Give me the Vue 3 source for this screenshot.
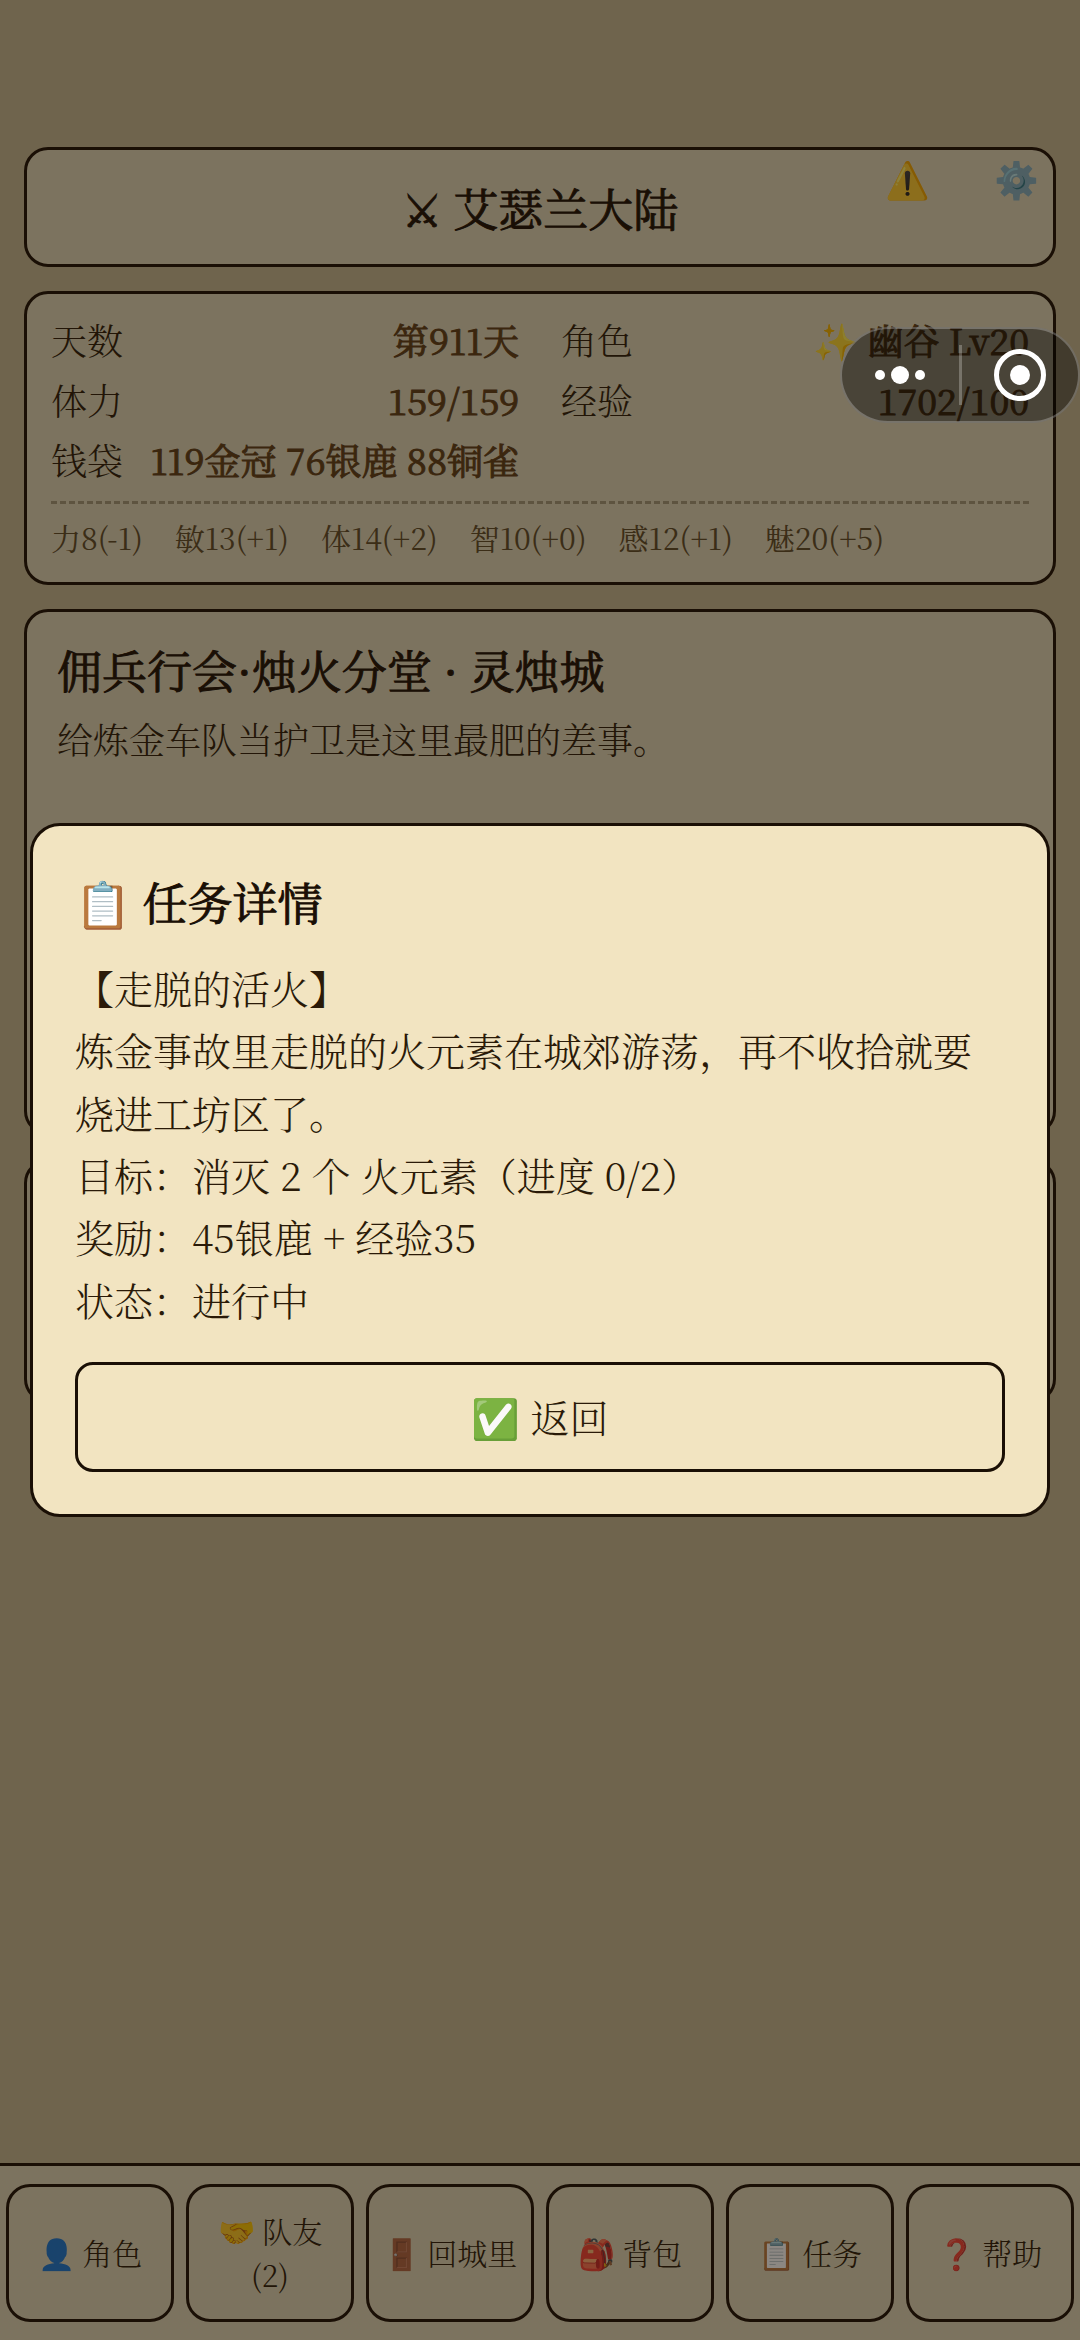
<template>
    <div class="page">
        <main class="content">
            <header class="card title-card">
                <h1>⚔ 艾瑟兰大陆</h1>
                <div class="tools">
                    <button type="button" aria-label="提示">⚠️</button>
                    <button type="button" aria-label="设置">⚙️</button>
                </div>
            </header>

            <section class="card status">
                <div class="rows">
                    <div class="row" v-for="item in status" :key="item.label">
                        <span>{{ item.label }}</span>
                        <b>{{ item.value }}</b>
                    </div>
                </div>
                <div class="stats">
                    <span v-for="s in stats" :key="s">{{ s }}</span>
                </div>
            </section>

            <section class="card place">
                <h2>佣兵行会·烛火分堂 · 灵烛城</h2>
                <p>给炼金车队当护卫是这里最肥的差事。</p>
            </section>

            <section class="card actions"></section>
        </main>

        <nav class="tabbar">
            <button type="button" v-for="tab in tabs" :key="tab">{{ tab }}</button>
        </nav>

        <div class="mask" v-if="showTask">
            <div class="modal" role="dialog" aria-labelledby="taskTitle">
                <h2 id="taskTitle">📋 任务详情</h2>
                <p v-for="line in task" :key="line">{{ line }}</p>
                <button type="button" @click="showTask = false">✅ 返回</button>
            </div>
        </div>

        <div class="capsule">
            <button type="button" aria-label="更多">
                <svg width="52" height="52" viewBox="0 0 52 52" fill="#fff">
                    <circle cx="6" cy="26" r="5" />
                    <circle cx="26" cy="26" r="9" />
                    <circle cx="46" cy="26" r="5" />
                </svg>
            </button>
            <i></i>
            <button type="button" aria-label="关闭">
                <svg width="52" height="52" viewBox="0 0 52 52">
                    <circle cx="26" cy="26" r="23.5" fill="none" stroke="#fff" stroke-width="5" />
                    <circle cx="26" cy="26" r="10" fill="#fff" />
                </svg>
            </button>
        </div>
    </div>
</template>


<script setup>

    import {ref} from 'vue'

    const showTask = ref(true)

    const status = [
        {label: '天数', value: '第911天'},
        {label: '角色', value: '✨ 幽谷 Lv20'},
        {label: '体力', value: '159/159'},
        {label: '经验', value: '1702/100'},
        {label: '钱袋', value: '119金冠 76银鹿 88铜雀'},
    ]

    const stats = ['力8(-1)', '敏13(+1)', '体14(+2)', '智10(+0)', '感12(+1)', '魅20(+5)']

    const tabs = ['👤 角色', '🤝 队友(2)', '🚪 回城里', '🎒 背包', '📋 任务', '❓ 帮助']

    const task = [
        '【走脱的活火】',
        '炼金事故里走脱的火元素在城郊游荡，再不收拾就要烧进工坊区了。',
        '目标：消灭 2 个 火元素（进度 0/2）',
        '奖励：45银鹿 + 经验35',
        '状态：进行中',
    ]

</script>

<style>
    body {
        margin: 0;
        background: #c5b894;
    }
</style>

<style scoped>
    .page {
        position: relative;
        display: flex;
        flex-direction: column;
        min-height: 100vh;
        background: #c5b894;
        color: #2a1a08;
        font-family: "Noto Serif CJK SC", "Noto Sans CJK SC", serif;
        font-size: 36px;
        font-weight: 300;
    }

    h1, h2, p {
        margin: 0;
    }

    h1, h2 {
        color: #1a0f05;
        font-size: 45px;
        font-weight: 400;
        line-height: 72px;
        -webkit-text-stroke: 1px currentColor;
    }

    button {
        padding: 0;
        border: none;
        background: none;
        color: inherit;
        font: inherit;
        cursor: pointer;
    }

    .content {
        flex: 1;
        display: flex;
        flex-direction: column;
        gap: 24px;
        padding: 147px 24px 24px;
    }

    .card {
        box-sizing: border-box;
        border: 3px solid #1a0f05;
        border-radius: 24px;
        background: #ded6b9;
    }

    .title-card {
        position: relative;
        padding: 22px 24px 20px;
        text-align: center;
    }

    .tools {
        position: absolute;
        top: 4px;
        right: 14px;
        display: flex;
        gap: 64px;
    }

    .tools button {
        line-height: 48px;
    }

    .status {
        padding: 16px 24px 21px;
    }

    .rows {
        display: grid;
        grid-template-columns: 1fr 1fr;
        column-gap: 42px;
    }

    .row {
        display: flex;
        justify-content: space-between;
        line-height: 60px;
        white-space: nowrap;
    }

    .row b {
        color: #5c3d17;
        font-weight: 400;
        -webkit-text-stroke: 1px currentColor;
    }

    .stats {
        display: flex;
        gap: 32px;
        margin-top: 11px;
        padding-top: 9px;
        border-top: 3px dashed #a2997b;
        color: #5c4a28;
        font-size: 30px;
        font-weight: 400;
        line-height: 48px;
    }

    .place {
        min-height: 526px;
        padding: 22px 30px;
    }

    .place p {
        margin-top: 3px;
        line-height: 60px;
    }

    .actions {
        min-height: 244px;
    }

    .tabbar {
        display: grid;
        grid-template-columns: repeat(6, 1fr);
        gap: 12px;
        padding: 18px 6px;
        border-top: 3px solid #1a0f05;
        background: #ded6b9;
    }

    .tabbar button {
        height: 138px;
        padding: 0 12px 2px;
        border: 3px solid #1a0f05;
        border-radius: 24px;
        font-size: 30px;
        line-height: 44px;
    }

    .mask {
        position: fixed;
        inset: 0;
        display: flex;
        align-items: center;
        justify-content: center;
        padding: 0 30px;
        background: rgba(26, 15, 5, 0.5);
    }

    .modal {
        flex: 1;
        padding: 40px 42px 42px;
        border: 3px solid #1a0f05;
        border-radius: 30px;
        background: #f2e4c1;
        font-size: 39px;
        line-height: 1.6;
    }

    .modal h2 {
        margin-bottom: 18px;
    }

    .modal button {
        width: 100%;
        height: 110px;
        margin-top: 32px;
        padding-bottom: 2px;
        border: 3px solid #1a0f05;
        border-radius: 18px;
    }

    .capsule {
        position: fixed;
        top: 327px;
        right: 0;
        box-sizing: border-box;
        display: flex;
        align-items: center;
        width: 240px;
        height: 96px;
        border: 2px solid rgba(255, 255, 255, 0.25);
        border-radius: 48px;
        background: rgba(0, 0, 0, 0.4);
    }

    .capsule button {
        flex: 1;
        display: flex;
        justify-content: center;
    }

    .capsule i {
        width: 3px;
        height: 60px;
        background: rgba(255, 255, 255, 0.25);
    }
</style>
